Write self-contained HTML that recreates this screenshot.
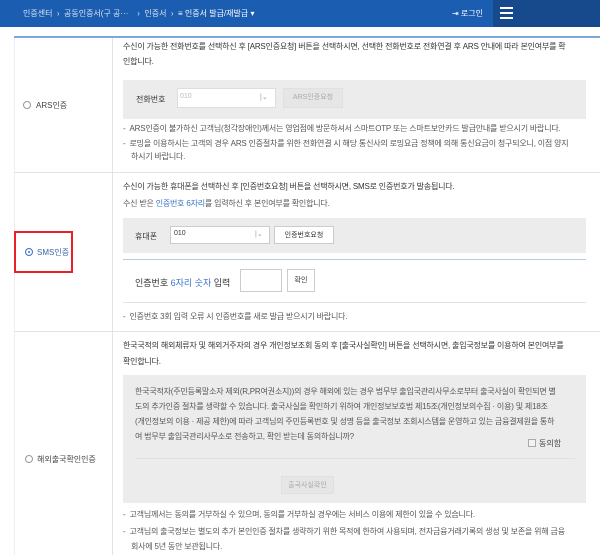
<!DOCTYPE html>
<html><head><meta charset="utf-8"><style>
*{margin:0;padding:0;box-sizing:border-box}
body{width:600px;height:555px;overflow:hidden;background:#fff;font-family:"Liberation Sans","Noto Sans CJK KR",sans-serif;font-size:8px;color:#333;position:relative}
.a{position:absolute;white-space:nowrap}
.hdr{position:absolute;left:0;top:0;width:600px;height:27px;background:#1b5db0;color:#fff}
.gray{position:absolute;background:#ececec}
.btn{position:absolute;border:1px solid #ccc;background:#fff;text-align:center;font-size:7px;line-height:17px}
.inp{position:absolute;border:1px solid #ccc;background:#fff}
.t{color:#555;line-height:16px;font-size:8px;letter-spacing:-0.2px}
.rad{position:absolute;width:8px;height:8px;border:1px solid #999;border-radius:50%;background:#fff}
</style></head><body>
<div class="hdr">
<div class="a" style="left:23px;top:8px;font-size:8px;color:#dbe6f5">인증센터 &nbsp;›&nbsp; 공동인증서(구 공··· &nbsp;&nbsp;&nbsp;›&nbsp; 인증서 &nbsp;›&nbsp; <span style="color:#fff">≡ 인증서 발급/재발급 ▾</span></div>
<div class="a" style="left:452px;top:8px;font-size:8px">⇥ 로그인</div>
<div class="a" style="left:493px;top:0;width:107px;height:27px;background:#164a8c"></div>
<div class="a" style="left:500px;top:7px;width:13px;height:2px;background:#fff;box-shadow:0 5px 0 #fff,0 10px 0 #fff"></div>
</div>
<div class="a" style="left:14px;top:36px;width:586px;height:2px;background:#7fa6dc"></div>
<div class="a" style="left:112px;top:38px;width:1px;height:517px;background:#e3e3e3"></div>
<div class="a" style="left:14px;top:38px;width:1px;height:517px;background:#eee"></div>
<div class="a" style="left:14px;top:172px;width:586px;height:1px;background:#e3e3e3"></div>
<div class="a" style="left:14px;top:331px;width:586px;height:1px;background:#e3e3e3"></div>

<!-- ARS -->
<div class="a t" style="left:123px;top:39px;color:#333">수신이 가능한 전화번호를 선택하신 후 [ARS인증요청] 버튼을 선택하시면, 선택한 전화번호로 전화연결 후 ARS 안내에 따라 본인여부를 확</div>
<div class="a t" style="left:123px;top:54px;color:#333">인합니다.</div>
<div class="gray" style="left:123px;top:80px;width:463px;height:39px"></div>
<div class="a" style="left:136px;top:94px;color:#333">전화번호</div>
<div class="inp" style="left:177px;top:88px;width:99px;height:20px;border-color:#ddd;color:#bbb;font-size:7px;padding:4px 2px">010<span style="position:absolute;left:82px;top:4px;color:#999">|⌄</span></div>
<div class="btn" style="left:283px;top:88px;width:60px;height:20px;background:#e6e6e6;border-color:#e0e0e0;color:#aaa">ARS인증요청</div>
<div class="rad" style="left:23px;top:101px"></div>
<div class="a" style="left:36px;top:100px;color:#444">ARS인증</div>
<div class="a t" style="left:123px;top:121px">- &nbsp;ARS인증이 불가하신 고객님(청각장애인)께서는 영업점에 방문하셔서 스마트OTP 또는 스마트보안카드 발급안내를 받으시기 바랍니다.</div>
<div class="a t" style="left:123px;top:136px">- &nbsp;로밍을 이용하시는 고객의 경우 ARS 인증절차를 위한 전화연결 시 해당 통신사의 로밍요금 정책에 의해 통신요금이 청구되오니, 이점 양지</div>
<div class="a t" style="left:131px;top:149px">하시기 바랍니다.</div>

<!-- SMS -->
<div class="a t" style="left:123px;top:179px;color:#333">수신이 가능한 휴대폰을 선택하신 후 [인증번호요청] 버튼을 선택하시면, SMS로 인증번호가 발송됩니다.</div>
<div class="a t" style="left:123px;top:196px">수신 받은 <span style="color:#3a74c8">인증번호 6자리</span>를 입력하신 후 본인여부를 확인합니다.</div>
<div class="gray" style="left:123px;top:218px;width:463px;height:35px"></div>
<div class="a" style="left:135px;top:231px">휴대폰</div>
<div class="inp" style="left:170px;top:226px;width:100px;height:18px;font-size:7px;padding:3px 3px">010<span style="position:absolute;left:84px;top:3px;color:#999">|⌄</span></div>
<div class="btn" style="left:274px;top:226px;width:60px;height:18px;color:#333">인증번호요청</div>
<div class="a" style="left:14px;top:231px;width:59px;height:42px;border:2px solid #e8202a"></div>
<div class="rad" style="left:25px;top:248px;border-color:#3a74c8;box-shadow:inset 0 0 0 2px #fff,inset 0 0 0 4px #3a74c8"></div>
<div class="a" style="left:37px;top:247px;color:#3a64a8">SMS인증</div>
<div class="a" style="left:123px;top:259px;width:463px;height:1px;background:#b8cbe6"></div>
<div class="a" style="left:135px;top:276px;font-size:9px;color:#333">인증번호 <span style="color:#3a74c8">6자리 숫자</span> 입력</div>
<div class="inp" style="left:240px;top:269px;width:42px;height:23px"></div>
<div class="btn" style="left:287px;top:269px;width:28px;height:23px;line-height:21px">확인</div>
<div class="a" style="left:123px;top:302px;width:463px;height:1px;background:#e3e3e3"></div>
<div class="a t" style="left:123px;top:309px">- &nbsp;인증번호 3회 입력 오류 시 인증번호를 새로 발급 받으시기 바랍니다.</div>

<!-- overseas -->
<div class="a t" style="left:123px;top:338px;color:#333">한국국적의 해외체류자 및 해외거주자의 경우 개인정보조회 동의 후 [출국사실확인] 버튼을 선택하시면, 출입국정보를 이용하여 본인여부를</div>
<div class="a t" style="left:123px;top:354px;color:#333">확인합니다.</div>
<div class="gray" style="left:123px;top:375px;width:463px;height:128px"></div>
<div class="a t" style="left:135px;top:384px;line-height:15px">한국국적자(주민등록말소자 제외(R,PR여권소지))의 경우 해외에 있는 경우 법무부 출입국관리사무소로부터 출국사실이 확인되면 별<br>도의 추가인증 절차를 생략할 수 있습니다. 출국사실을 확인하기 위하여 개인정보보호법 제15조(개인정보의수집 · 이용) 및 제18조<br>(개인정보의 이용 · 제공 제한)에 따라 고객님의 주민등록번호 및 성명 등을 출국정보 조회시스템을 운영하고 있는 금융결제원을 통하<br>여 법무부 출입국관리사무소로 전송하고, 확인 받는데 동의하십니까?</div>
<div class="a" style="left:528px;top:439px;width:8px;height:8px;border:1px solid #aaa;background:#f3f3f3"></div>
<div class="a" style="left:539px;top:438px;color:#444">동의함</div>
<div class="a" style="left:135px;top:458px;width:440px;height:1px;background:#e0e0e0"></div>
<div class="btn" style="left:281px;top:476px;width:53px;height:18px;background:#e6e6e6;border-color:#e0e0e0;color:#aaa">출국사실확인</div>
<div class="rad" style="left:25px;top:455px"></div>
<div class="a" style="left:37px;top:454px;color:#444">해외출국확인인증</div>
<div class="a t" style="left:123px;top:507px">- &nbsp;고객님께서는 동의를 거부하실 수 있으며, 동의를 거부하실 경우에는 서비스 이용에 제한이 있을 수 있습니다.</div>
<div class="a t" style="left:123px;top:524px">- &nbsp;고객님의 출국정보는 별도의 추가 본인인증 절차를 생략하기 위한 목적에 한하여 사용되며, 전자금융거래기록의 생성 및 보존을 위해 금융</div>
<div class="a t" style="left:131px;top:539px">회사에 5년 동안 보관됩니다.</div>
</body></html>
